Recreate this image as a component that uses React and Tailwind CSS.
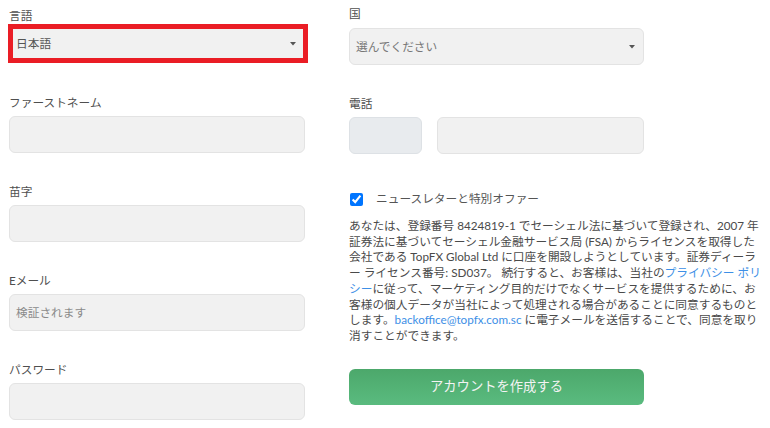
import { useState } from 'react'

const FONT = { fontFamily: 'Lato, "Noto Sans CJK JP", sans-serif' }

function Caret() {
  return (
    <svg width="6" height="4" viewBox="0 0 6 4" className="shrink-0">
      <path d="M0 0h6L3 3.5z" fill="#555" />
    </svg>
  )
}

function Label({ children }) {
  return <div className="text-[11.7px] leading-[16px] text-[#4f4f4f]">{children}</div>
}

function TextInput({ placeholder }) {
  return (
    <div className="mt-[6px] h-[37px] w-[296px] rounded-[6px] border border-[#e3e3e3] bg-[#f1f1f1] px-[6px] flex items-center text-[11.7px] text-[#8a8a8a]">
      {placeholder}
    </div>
  )
}

export default function App() {
  const [news, setNews] = useState(true)

  return (
    <div className="w-[770px] h-[428px] bg-white flex pl-[9px] overflow-hidden" style={FONT}>
      {/* 左カラム */}
      <div className="w-[296px] pt-[7px]">
        <Label>言語</Label>
        <div className="mt-[1px] -ml-[1px] w-[300px] h-[39px] border-[5px] border-[#ea1d25] bg-[#f1f1f1] flex items-center justify-between pl-[3px] pr-[7px] text-[11.7px] text-[#555]">
          <span>日本語</span>
          <Caret />
        </div>

        <div className="mt-[31px]">
          <Label>ファーストネーム</Label>
          <TextInput />
        </div>
        <div className="mt-[30px]">
          <Label>苗字</Label>
          <TextInput />
        </div>
        <div className="mt-[30px]">
          <Label>Eメール</Label>
          <TextInput placeholder="検証されます" />
        </div>
        <div className="mt-[30px]">
          <Label>パスワード</Label>
          <TextInput />
        </div>
      </div>

      {/* 右カラム */}
      <div className="ml-[44px] w-[420px] pt-[5px]">
        <Label>国</Label>
        <div className="mt-[7px] h-[37px] w-[295px] rounded-[6px] border border-[#e3e3e3] bg-[#f1f1f1] flex items-center justify-between pl-[6px] pr-[8px] text-[11.7px] text-[#777]">
          <span>選んでください</span>
          <Caret />
        </div>

        <div className="mt-[30px]">
          <Label>電話</Label>
          <div className="mt-[6px] flex gap-[15px]">
            <div className="h-[37px] w-[73px] rounded-[6px] border border-[#dde1e5] bg-[#e8ebee]" />
            <div className="h-[37px] w-[207px] rounded-[6px] border border-[#e3e3e3] bg-[#f1f1f1]" />
          </div>
        </div>

        <label className="mt-[37px] flex items-center h-[16px] text-[11.7px] text-[#555]">
          <input
            type="checkbox"
            checked={news}
            onChange={e => setNews(e.target.checked)}
            className="m-0 ml-[1px] w-[13px] h-[13px] accent-[#0075ff]"
          />
          <span className="ml-[13px]">ニュースレターと特別オファー</span>
        </label>

        <p className="mt-[11px] text-[11.7px] leading-[15.7px] text-[#4a4a4a] whitespace-nowrap">
          あなたは、登録番号 8424819-1 でセーシェル法に基づいて登録され、2007 年<br />
          証券法に基づいてセーシェル金融サービス局 (FSA) からライセンスを取得した<br />
          会社である TopFX Global Ltd に口座を開設しようとしています。証券ディーラ<br />
          ー ライセンス番号: SD037。 続行すると、お客様は、当社の<a className="text-[#3d8fe6]">プライバシー ポリ</a><br />
          <a className="text-[#3d8fe6]">シー</a>に従って、マーケティング目的だけでなくサービスを提供するために、お<br />
          客様の個人データが当社によって処理される場合があることに同意するものと<br />
          します。<a className="text-[#3d8fe6]">backoffice@topfx.com.sc</a> に電子メールを送信することで、同意を取り<br />
          消すことができます。
        </p>

        <button className="mt-[25px] h-[36px] w-[295px] rounded-[6px] bg-gradient-to-b from-[#4ca86b] to-[#5abb7f] text-[13.3px] text-[#f3f3f3]">
          アカウントを作成する
        </button>
      </div>
    </div>
  )
}
